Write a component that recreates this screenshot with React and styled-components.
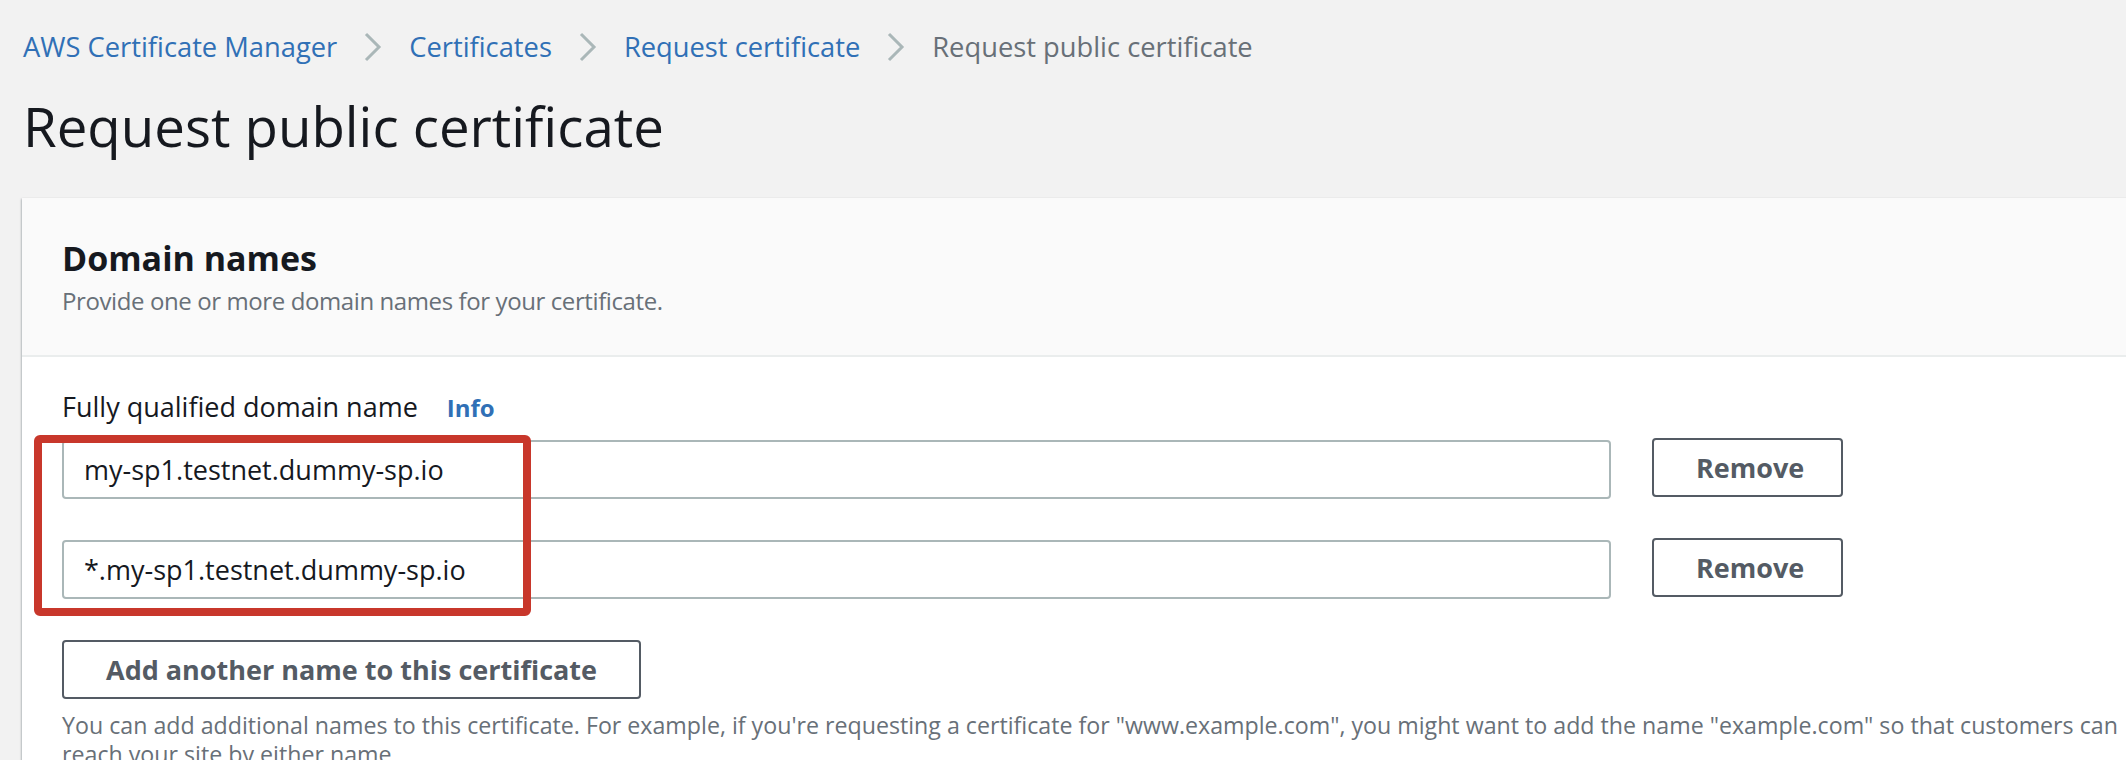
import React from 'react';
import styled, { createGlobalStyle } from 'styled-components';

const GlobalStyle = createGlobalStyle`
  html, body {
    margin: 0;
    padding: 0;
    background: #f2f2f2;
    font-family: "Open Sans", "Noto Sans", sans-serif;
    color: #16191f;
  }
`;

const Page = styled.div`
  width: 2126px;
  height: 760px;
  overflow: hidden;
  padding-left: 22px;
  box-sizing: border-box;
`;

const Crumbs = styled.nav`
  display: flex;
  align-items: center;
  gap: 27px;
  height: 40px;
  margin-top: 27px;
  padding-left: 1px;
  font-size: 27.3px;
  line-height: 40px;
`;

const Crumb = styled.span`
  color: ${props => (props.current ? '#687078' : '#3070b6')};
  white-space: nowrap;
`;

const Chevron = () => (
  <svg width="18" height="30" viewBox="0 0 18 30" fill="none">
    <polyline points="2,2 15,15 2,28" stroke="#aab7b8" strokeWidth="3" />
  </svg>
);

const Title = styled.h1`
  margin: 27px 0 0 1px;
  font-size: 54.6px;
  line-height: 64px;
  font-weight: 400;
  color: #16191f;
`;

const Panel = styled.section`
  margin-top: 40px;
  width: 2400px;
  background: #ffffff;
  box-shadow: 0 1px 2px 0 rgba(0, 28, 36, 0.3), -1px 1px 2px 0 rgba(0, 28, 36, 0.15);
`;

const PanelHeader = styled.header`
  background: #fafafa;
  padding: 40px 40px 38px;
  border-bottom: 2px solid #eaeded;
`;

const PanelTitle = styled.h2`
  margin: 0;
  font-size: 34px;
  line-height: 40px;
  font-weight: 700;
  color: #16191f;
`;

const PanelDesc = styled.p`
  margin: 7px 0 0;
  font-size: 24px;
  letter-spacing: -0.4px;
  line-height: 32px;
  color: #687078;
`;

const PanelBody = styled.div`
  padding: 33px 40px 0;
`;

const Label = styled.div`
  display: flex;
  align-items: baseline;
  gap: 29px;
  font-size: 27px;
  line-height: 34px;
  color: #16191f;
`;

const InfoLink = styled.span`
  font-weight: 700;
  font-size: 24px;
  color: #3070b6;
`;

const Fields = styled.div`
  position: relative;
  display: flex;
  flex-direction: column;
  gap: 41px;
  margin-top: 15px;
`;

const FieldRow = styled.div`
  display: grid;
  grid-template-columns: 1549px 191px;
  gap: 41px;
  align-items: start;
`;

const TextInput = styled.div`
  height: 59px;
  box-sizing: border-box;
  border: 2px solid #aab7b8;
  border-radius: 4px;
  padding: 0 20px;
  display: flex;
  align-items: center;
  font-size: 27px;
  color: #16191f;
  background: #fff;
`;

const Button = styled.button`
  height: 59px;
  margin-top: ${props => (props.lift ? '-2px' : '0')};
  box-sizing: border-box;
  border: 2px solid #545b64;
  border-radius: 4px;
  background: #ffffff;
  color: #545b64;
  font-family: inherit;
  font-size: 27px;
  font-weight: 700;
  padding: 0 42px;
  cursor: pointer;
`;

const Highlight = styled.div`
  position: absolute;
  left: -28px;
  top: -5px;
  width: 497px;
  height: 181px;
  box-sizing: border-box;
  border: 8px solid #c8372b;
  border-radius: 6px;
  pointer-events: none;
`;

const AddRow = styled.div`
  margin-top: 41px;
`;

const Hint = styled.p`
  margin: 12px 0 0;
  font-size: 23.2px;
  line-height: 29px;
  color: #687078;
  white-space: nowrap;
`;

const domains = ['my-sp1.testnet.dummy-sp.io', '*.my-sp1.testnet.dummy-sp.io'];

export default function App() {
  return (
    <Page>
      <GlobalStyle />
      <Crumbs>
        <Crumb>AWS Certificate Manager</Crumb>
        <Chevron />
        <Crumb>Certificates</Crumb>
        <Chevron />
        <Crumb>Request certificate</Crumb>
        <Chevron />
        <Crumb current>Request public certificate</Crumb>
      </Crumbs>
      <Title>Request public certificate</Title>
      <Panel>
        <PanelHeader>
          <PanelTitle>Domain names</PanelTitle>
          <PanelDesc>Provide one or more domain names for your certificate.</PanelDesc>
        </PanelHeader>
        <PanelBody>
          <Label>
            Fully qualified domain name
            <InfoLink>Info</InfoLink>
          </Label>
          <Fields>
            {domains.map(d => (
              <FieldRow key={d}>
                <TextInput>{d}</TextInput>
                <Button lift>Remove</Button>
              </FieldRow>
            ))}
            <Highlight />
          </Fields>
          <AddRow>
            <Button>Add another name to this certificate</Button>
          </AddRow>
          <Hint>
            You can add additional names to this certificate. For example, if you're requesting a certificate for "www.example.com", you might want to add the name "example.com" so that customers can
            <br />
            reach your site by either name.
          </Hint>
        </PanelBody>
      </Panel>
    </Page>
  );
}
